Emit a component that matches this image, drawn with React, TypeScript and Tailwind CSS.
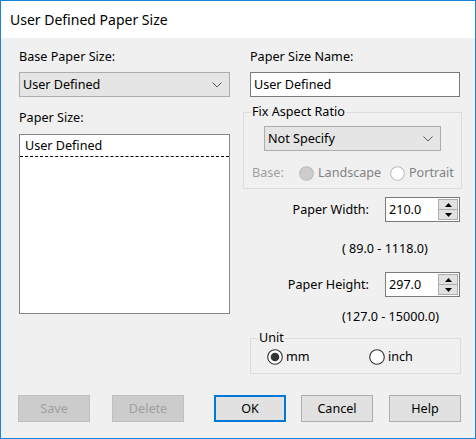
import React from 'react';

const font = { fontFamily: '"Noto Sans", "Open Sans", sans-serif' };

function Chevron() {
  return (
    <svg width="10" height="6" viewBox="0 0 10 6" className="shrink-0">
      <polyline points="0.5,0.5 5,5 9.5,0.5" fill="none" stroke="#5a5a5a" strokeWidth="1" />
    </svg>
  );
}

function Dropdown({ value, className = '' }: { value: string; className?: string }) {
  return (
    <div className={`flex h-[25px] items-center justify-between border border-[#adadad] bg-[#e5e5e5] pl-[3px] pr-[7px] ${className}`}>
      <span>{value}</span>
      <Chevron />
    </div>
  );
}

function Radio({ checked = false, disabled = false, size = 15 }: { checked?: boolean; disabled?: boolean; size?: number }) {
  const ring = disabled ? '#bcbcbc' : '#333333';
  return (
    <svg width={size} height={size} viewBox="0 0 16 16" className="shrink-0">
      <circle cx="8" cy="8" r="7.3" fill={disabled && checked ? '#cccccc' : '#ffffff'} stroke={ring} strokeWidth="1.1" />
      {checked && !disabled && <circle cx="8" cy="8" r="4.3" fill="#333333" />}
    </svg>
  );
}

function SpinBox({ value }: { value: string }) {
  return (
    <div className="flex h-[25px] w-[75px] items-center border border-[#7a7a7a] bg-white pl-[3px] pr-[1px]">
      <span className="flex-1">{value}</span>
      <div className="flex h-[21px] w-[20px] flex-col">
        <div className="flex flex-1 items-center justify-center border border-[#adadad] bg-[#e1e1e1]">
          <svg width="7" height="4" viewBox="0 0 7 4"><polygon points="0,4 7,4 3.5,0" fill="#000" /></svg>
        </div>
        <div className="flex flex-1 items-center justify-center border border-t-0 border-[#adadad] bg-[#e1e1e1]">
          <svg width="7" height="4" viewBox="0 0 7 4"><polygon points="0,0 7,0 3.5,4" fill="#000" /></svg>
        </div>
      </div>
    </div>
  );
}

function Btn({ label, disabled = false, primary = false, className = '' }: { label: string; disabled?: boolean; primary?: boolean; className?: string }) {
  const look = disabled
    ? 'border border-[#bfbfbf] bg-[#cccccc] text-[#a0a0a0]'
    : primary
      ? 'border-2 border-[#0078d7] bg-[#e1e1e1] text-black'
      : 'border border-[#adadad] bg-[#e1e1e1] text-black';
  return (
    <div className={`flex h-[27px] w-[72px] items-center justify-center ${look} ${className}`}>
      {label}
    </div>
  );
}

export default function App() {
  return (
    <div
      className="flex h-[439px] w-[476px] flex-col border border-[#1883d7] bg-[#f0f0f0] text-[12.6px] leading-[16px] text-black"
      style={font}
    >
      <div className="flex h-[37px] shrink-0 items-center bg-white pl-[9px] text-[14px]">
        User Defined Paper Size
      </div>

      <div className="flex pl-[18px]">
        {/* left column */}
        <div className="flex w-[211px] flex-col">
          <div className="mt-[11px] h-[16px]">Base Paper Size:</div>
          <Dropdown value="User Defined" className="mt-[7px]" />
          <div className="mt-[13px] h-[16px]">Paper Size:</div>
          <div className="mt-[8px] h-[180px] border border-[#828790] bg-white">
            <div className="flex h-[22px] items-center border-b border-dashed border-black pl-[5px]">
              User Defined
            </div>
          </div>
        </div>

        {/* right column */}
        <div className="ml-[13px] flex w-[219px] flex-col">
          <div className="ml-[7px] mt-[11px] h-[16px]">Paper Size Name:</div>
          <div className="ml-[7px] mt-[7px] flex h-[25px] w-[210px] items-center border border-[#7a7a7a] bg-white pl-[3px]">
            User Defined
          </div>

          <fieldset className="mt-[7px] border border-[#dcdcdc] pb-[7px]">
            <legend className="ml-[7px] h-[16px] px-[1px]">Fix Aspect Ratio</legend>
            <Dropdown value="Not Specify" className="ml-[20px] mt-[6px] w-[177px]" />
            <div className="mt-[14px] flex h-[16px] items-center text-[#838383]">
              <span className="ml-[8px] w-[47px] text-[#a0a0a0]">Base:</span>
              <div className="flex w-[91px] items-center">
                <Radio checked disabled />
                <span className="ml-[4px]">Landscape</span>
              </div>
              <div className="flex items-center">
                <Radio disabled />
                <span className="ml-[4px]">Portrait</span>
              </div>
            </div>
          </fieldset>

          <div className="mt-[8px] flex items-center justify-end pr-[2px]">
            <span className="mr-[16px]">Paper Width:</span>
            <SpinBox value="210.0" />
          </div>
          <div className="ml-[99px] mt-[19px] h-[16px] whitespace-pre">( 89.0 - 1118.0)</div>

          <div className="mt-[15px] flex items-center justify-end pr-[2px]">
            <span className="mr-[16px]">Paper Height:</span>
            <SpinBox value="297.0" />
          </div>
          <div className="ml-[99px] mt-[12px] h-[16px] whitespace-pre">(127.0 - 15000.0)</div>

          <fieldset className="ml-[7px] mt-[5px] w-[211px] border border-[#dcdcdc] pb-[8px]">
            <legend className="ml-[7px] h-[16px] px-[1px]">Unit</legend>
            <div className="mt-[3px] flex h-[16px] items-center">
              <div className="ml-[16px] flex w-[102px] items-center">
                <Radio checked size={16} />
                <span className="ml-[3px]">mm</span>
              </div>
              <div className="flex items-center">
                <Radio size={16} />
                <span className="ml-[3px]">inch</span>
              </div>
            </div>
          </fieldset>
        </div>
      </div>

      <div className="mt-[21px] flex">
        <Btn label="Save" disabled className="ml-[17px]" />
        <Btn label="Delete" disabled className="ml-[22px]" />
        <Btn label="OK" primary className="ml-[30px]" />
        <Btn label="Cancel" className="ml-[15px]" />
        <Btn label="Help" className="ml-[16px]" />
      </div>
    </div>
  );
}
